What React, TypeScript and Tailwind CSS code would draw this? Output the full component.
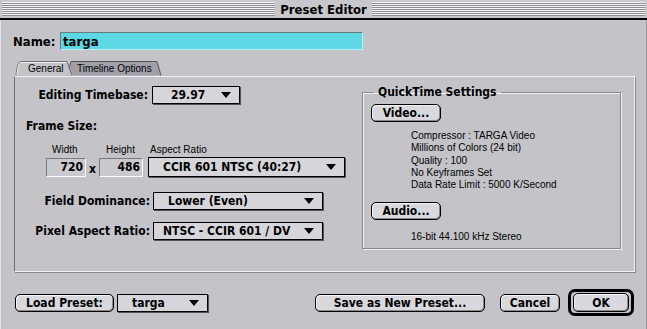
import React from "react";

const BOLD = "font-['DejaVu_Sans_Condensed','Liberation_Sans_Narrow','Liberation_Sans',sans-serif] font-bold [font-stretch:condensed]";
const SMALL = "font-['Liberation_Sans','Arial',sans-serif] text-[10px]";

function Tri() {
  return (
    <svg width="10" height="6" viewBox="0 0 10 6" className="shrink-0">
      <polygon points="0,0 10,0 5,6" fill="#000" />
    </svg>
  );
}

function Popup({ w, h = 18, pl, label }: { w: number; h?: number; pl: number; label: string }) {
  return (
    <div
      className={`flex items-center border border-black bg-[#d6d6da] shadow-[1px_1px_0_#555] pr-[8px] ${BOLD} text-[12px] text-black`}
      style={{ width: w, height: h, paddingLeft: pl }}
    >
      <span className="flex-1 leading-none whitespace-nowrap">{label}</span>
      <Tri />
    </div>
  );
}

function Button({ w, label, h = 18 }: { w: number; label: string; h?: number }) {
  return (
    <div
      className={`flex items-center justify-center rounded-[5px] border border-black bg-[#d9d9dd] shadow-[inset_-1px_-1px_0_#8a8a8e,inset_1px_1px_0_#f4f4f4] ${BOLD} text-[12px] text-black leading-none`}
      style={{ width: w, height: h }}
    >
      {label}
    </div>
  );
}

function Field({ w, value }: { w: number; value: string }) {
  return (
    <div
      className={`flex items-center justify-end h-[19px] border border-t-[#7a7a7e] border-l-[#7a7a7e] border-r-white border-b-white bg-[#cacace] pr-[2px] ${BOLD} text-[12px] leading-none`}
      style={{ width: w }}
    >
      {value}
    </div>
  );
}

export default function App() {
  return (
    <div className="w-[647px] h-[329px] bg-[#c4c4c8] flex flex-col overflow-hidden text-black">
      {/* title bar */}
      <div className="h-[18px] flex items-center pl-[2px] pr-[2px] bg-[#c8c8cc]">
        <div className="flex-1 h-[14px] bg-[repeating-linear-gradient(to_bottom,#f6f6f6_0px,#f6f6f6_1px,#8c8c90_1px,#8c8c90_2px)]" />
        <div className={`px-[5px] ${BOLD} text-[13px] leading-none`}>Preset Editor</div>
        <div className="flex-1 h-[14px] bg-[repeating-linear-gradient(to_bottom,#f6f6f6_0px,#f6f6f6_1px,#8c8c90_1px,#8c8c90_2px)]" />
      </div>
      <div className="h-[2px] bg-black" />

      <div className="flex-1 flex flex-col border-l border-l-[#e4e4e8] border-r border-r-[#9a9a9e]">
        {/* Name row */}
        <div className="flex items-center mt-[12px] pl-[12px]">
          <div className={`w-[47px] ${BOLD} text-[13px] leading-none`}>Name:</div>
          <div className={`w-[303px] h-[18px] bg-[#5dd8e4] border border-t-[#6a7a7e] border-l-[#6a7a7e] border-r-[#b8eef4] border-b-[#b8eef4] flex items-center pl-[2px] ${BOLD} text-[13px] leading-none`}>
            targa
          </div>
        </div>

        {/* Tabs */}
        <div className="relative h-[15px] mt-[11px] ml-[14px] w-[150px]">
          <svg className="absolute inset-0" width="150" height="15" viewBox="0 0 150 15">
            <path d="M52 14.5 L56 0.5 L142 0.5 L146 14.5" fill="#a0a0a8" stroke="#555" />
            <path d="M1 14.5 Q2 1 6 0.5 L52 0.5 L57 14.5" fill="#c4c4c8" stroke="#6e6e72" />
            <path d="M2 14 Q3 2 6 1.5 L51 1.5" fill="none" stroke="#f0f0f0" />
          </svg>
          <div className={`relative flex items-center h-[15px] ${SMALL} text-[10.5px] leading-none`}>
            <span className="ml-[13px] w-[48px]">General</span>
            <span className="ml-[1px]">Timeline Options</span>
          </div>
        </div>

        {/* Panel */}
        <div className="ml-[13px] mr-[11px] h-[196px] border border-l-[#6e6e72] border-t-[#f0f0f0] border-r-[#f2f2f2] border-b-[#f2f2f2] shadow-[1px_1px_0_#8a8a8e] flex">
          {/* left column */}
          <div className="w-[334px] flex flex-col">
            <div className="flex items-center mt-[9px]">
              <div className={`w-[133px] text-right ${BOLD} text-[12px] leading-none`}>Editing Timebase:</div>
              <div className="ml-[4px]"><Popup w={88} pl={18} label="29.97" /></div>
            </div>
            <div className={`mt-[16px] ml-[11px] ${BOLD} text-[12px] leading-none`}>Frame Size:</div>
            <div className={`flex mt-[13px] ${SMALL} leading-[10px]`}>
              <span className="ml-[37px] w-[47px]">Width</span>
              <span className="ml-[7px] w-[42px]">Height</span>
              <span className="ml-[2px]">Aspect Ratio</span>
            </div>
            <div className="flex items-center mt-[2px]">
              <div className="ml-[31px]"><Field w={40} value="720" /></div>
              <div className={`w-[13px] text-center ${BOLD} text-[12px] leading-none mt-[4px]`}>x</div>
              <Field w={44} value="486" />
              <div className="ml-[5px]"><Popup w={197} h={20} pl={14} label="CCIR 601 NTSC (40:27)" /></div>
            </div>
            <div className="flex items-center mt-[15px]">
              <div className={`w-[135px] text-right ${BOLD} text-[12px] leading-none`}>Field Dominance:</div>
              <div className="ml-[3px]"><Popup w={170} pl={14} label="Lower (Even)" /></div>
            </div>
            <div className="flex items-center mt-[12px]">
              <div className={`w-[135px] text-right ${BOLD} text-[12px] leading-none`}>Pixel Aspect Ratio:</div>
              <div className="ml-[3px]"><Popup w={170} pl={9} label="NTSC - CCIR 601 / DV" /></div>
            </div>
          </div>

          {/* QuickTime group */}
          <fieldset className="ml-[13px] mt-[8px] w-[259px] h-[164px] border border-[#8a8a8e] shadow-[1px_1px_0_#f2f2f2,inset_1px_1px_0_#f2f2f2] pl-[8px] pt-[0px] m-0">
            <legend className={`ml-[3px] px-[4px] ${BOLD} text-[12px] leading-[14px]`}>QuickTime Settings</legend>
            <div className="mt-[5px]"><Button w={70} label="Video..." /></div>
            <div className={`ml-[40px] mt-[8px] ${SMALL} leading-[12.3px]`}>
              <div>Compressor : TARGA Video</div>
              <div>Millions of Colors (24 bit)</div>
              <div>Quality : 100</div>
              <div>No Keyframes Set</div>
              <div>Data Rate Limit : 5000 K/Second</div>
            </div>
            <div className="mt-[11px]"><Button w={70} label="Audio..." /></div>
            <div className={`ml-[40px] mt-[11px] ${SMALL} leading-[12px]`}>16-bit 44.100 kHz Stereo</div>
          </fieldset>
        </div>

        {/* bottom row */}
        <div className="flex items-center mt-[17px] pl-[14px]">
          <Button w={99} label="Load Preset:" />
          <div className="ml-[3px]"><Popup w={91} pl={14} label="targa" /></div>
          <div className="ml-[107px]"><Button w={170} label="Save as New Preset..." /></div>
          <div className="ml-[15px]"><Button w={60} label="Cancel" /></div>
          <div className="ml-[8px] w-[66px] h-[27px] rounded-[7px] border-[3px] border-black flex items-center justify-center bg-[#c4c4c8]">
            <Button w={56} h={19} label="OK" />
          </div>
        </div>
      </div>
    </div>
  );
}
